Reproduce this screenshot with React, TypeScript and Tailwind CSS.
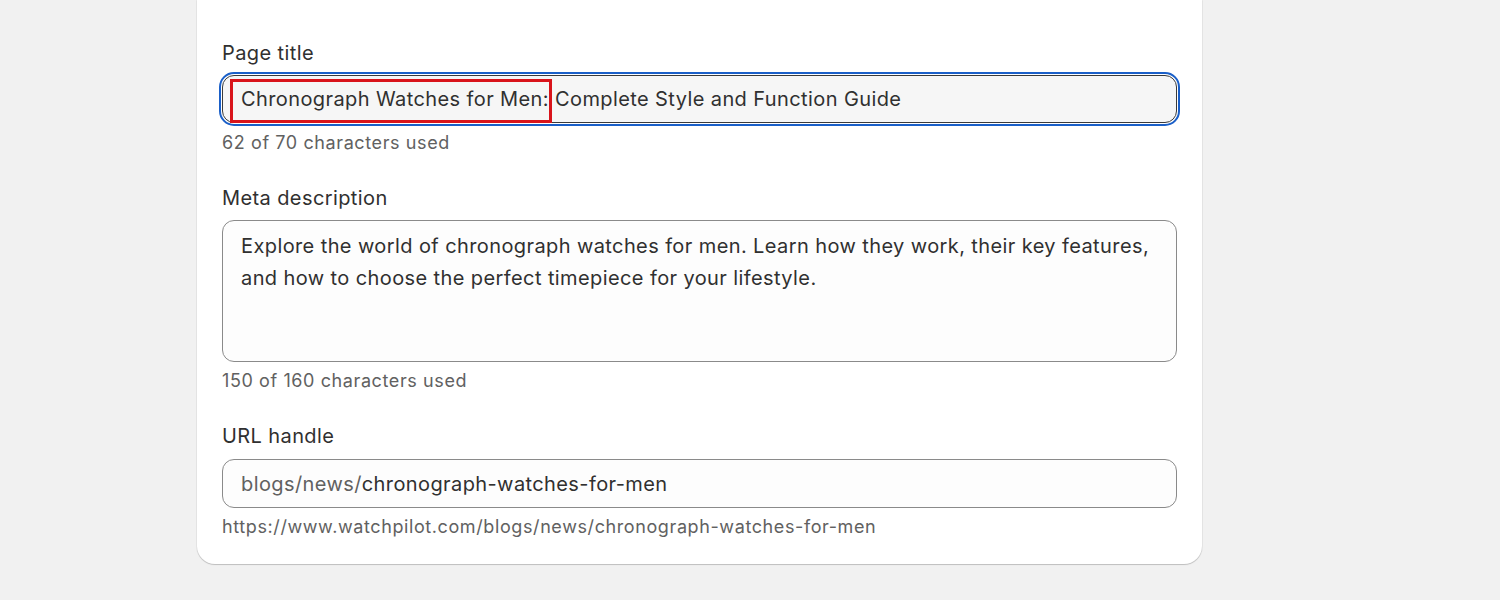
import React from 'react';

const font = { fontFamily: 'Inter, "Noto Sans", sans-serif' };

function Label({ children }: { children: React.ReactNode }) {
  return <div className="text-[20px] leading-[30px] tracking-[0.4px] text-[#303030]">{children}</div>;
}

function Help({ children }: { children: React.ReactNode }) {
  return <div className="text-[18px] leading-[30px] tracking-[0.6px] text-[#616161]">{children}</div>;
}

export default function App() {
  return (
    <div className="min-h-[600px] w-full bg-[#f1f1f1]" style={font}>
      <div className="ml-[197px] w-[1005px] rounded-b-[18px] bg-white px-[25px] pt-[38px] pb-[22px] shadow-[0_1px_1px_rgba(0,0,0,0.18),0_0_0_1px_rgba(0,0,0,0.04)]">
        <Label>Page title</Label>
        <div className="relative mt-[7px]">
          <div className="flex h-[48px] items-center rounded-[12px] border border-[#3a3a3a] bg-[#f6f6f6] px-[18px] text-[20px] tracking-[0.4px] text-[#303030] outline-[2.5px] outline-offset-1 outline-[#1a5fc8]">
            Chronograph Watches for Men: Complete Style and Function Guide
          </div>
          <div className="pointer-events-none absolute left-[8px] top-[4px] h-[44px] w-[322px] border-[3px] border-[#d9141b]" />
        </div>
        <div className="mt-[5px]">
          <Help>62 of 70 characters used</Help>
        </div>

        <div className="mt-[25px]">
          <Label>Meta description</Label>
        </div>
        <div className="mt-[7px] h-[142px] rounded-[12px] border border-[#8a8a8a] bg-[#fdfdfd] px-[18px] pt-[9px] text-[20px] leading-[32px] tracking-[0.4px] text-[#303030]">
          Explore the world of chronograph watches for men. Learn how they work, their key features, and how to choose the perfect timepiece for your lifestyle.
        </div>
        <div className="mt-[4px]">
          <Help>150 of 160 characters used</Help>
        </div>

        <div className="mt-[25px]">
          <Label>URL handle</Label>
        </div>
        <div className="mt-[8px] flex h-[49px] items-center rounded-[12px] border border-[#8a8a8a] bg-[#fdfdfd] px-[18px] text-[20px] tracking-[0.4px]">
          <span className="text-[#616161]">blogs/news/</span>
          <span className="text-[#303030]">chronograph-watches-for-men</span>
        </div>
        <div className="mt-[4px]">
          <Help>https://www.watchpilot.com/blogs/news/chronograph-watches-for-men</Help>
        </div>
      </div>
    </div>
  );
}
